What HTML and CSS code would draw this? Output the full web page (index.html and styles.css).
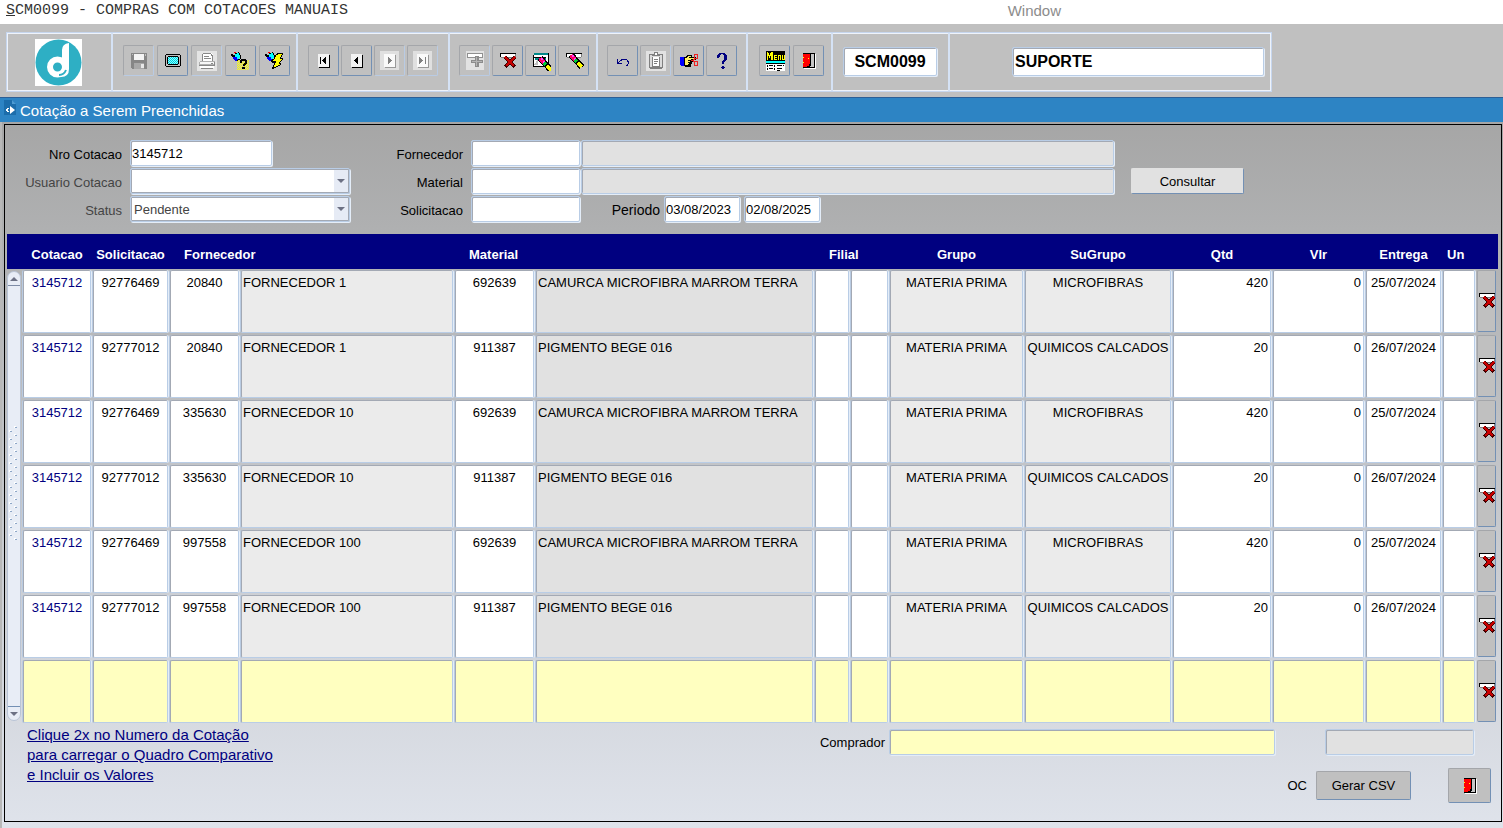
FILE: index.html
```html
<!DOCTYPE html>
<html lang="pt-BR">
<head>
    <meta charset="UTF-8">
    <meta name="viewport" content="width=device-width, initial-scale=1.0">
    <title>SCM0099 - COMPRAS COM COTACOES MANUAIS</title>
    <link rel="stylesheet" href="styles.css">
</head>
<body>
    <!-- Icons -->
    <svg class="sprite" aria-hidden="true">
        <defs>
            <pattern id="dither-yellow" width="2" height="2" patternUnits="userSpaceOnUse">
                <path fill="#ff0" d="M0 0h1v1H0zM1 1h1v1H1z"/>
            </pattern>
            <pattern id="dither-cyan" width="2" height="2" patternUnits="userSpaceOnUse">
                <path fill="#8ff" d="M0 0h2v2H0z"/>
                <path fill="#00d0e0" d="M0 0h1v1H0zM1 1h1v1H1z"/>
            </pattern>
            <pattern id="dots" width="10" height="8" patternUnits="userSpaceOnUse">
                <path fill="#fff" d="M0 4h2v2H0zM5 0h2v2H5z"/>
                <path fill="#8fa8c8" d="M1 5h2v1H1zM6 1h2v1H6z"/>
            </pattern>
        </defs>
        <symbol id="i-save" viewBox="0 0 20 20">
            <path fill="#868686" d="M2 2h16v16H3v-1H2z"/>
            <path fill="#f4f4f4" d="M5 3h10v6H5z"/>
            <path fill="#a8a8a8" d="M5 12h10v6H5z"/>
            <path fill="#e8e8e8" d="M12 13h3v4h-3z"/>
            <path fill="#c0c0c0" d="M3 3h1v1H3zM16 3h1v2h-1z"/>
        </symbol>
        <symbol id="i-screen" viewBox="0 0 20 20">
            <path fill="#000" d="M3 3h14v1h1v11h-1v1H3v-1H2V4h1z"/>
            <path fill="#c0c0c0" d="M3 4h14v11H3z"/>
            <path fill="#000" d="M5 5h10v1h1v7h-1v1H5v-1H4V6h1z"/>
            <path fill="url(#dither-cyan)" d="M5 6h10v7H5z"/>
        </symbol>
        <symbol id="i-print" viewBox="0 0 20 20">
            <path fill="#e4e4e4" d="M0 0h20v20H0z"/>
            <path fill="#fff" d="M6 2h8l2 2v6H5V3z"/>
            <path fill="#888" d="M6 2h8v1H6zM5 3h1v7H5zM14 3h1v1h1v6h-1V5h-1zM7 5h5v1H7zM7 7h7v1H7z"/>
            <path fill="#b0b0b0" d="M3 10h14l1 1v4H2v-4z"/>
            <path fill="#f8f8f8" d="M3 11h14v2H3z"/>
            <path fill="#888" d="M2 14h16v1H2zM4 17h12v1H4zM14 12h2v1h-2zM17 11h1v4h-1z"/>
            <path fill="#fff" d="M3 15h14v2H3z"/>
        </symbol>
        <symbol id="i-torch" viewBox="0 0 20 20">
            <path fill="#000" d="M0 3h2v1h2v1h1v3H3V7H2V6H1V5H0z"/>
            <path fill="#f00" d="M3 1h2v1H3z"/>
            <path fill="#0ff" d="M4 3h2V2h2v2h2v3H8v1H6V6H4z"/>
            <path fill="#00f" d="M2 6h4v2h1v2H4V9H3V8H2z"/>
            <path fill="#000" d="M4 2h2v1H4zM7 1h1v1H7zM8 2h1v2H8zM9 4h1v4H9zM7 8h2v1H7zM6 9h1v2H6z"/>
        </symbol>
        <symbol id="i-enter-query" viewBox="0 0 20 20">
            <use href="#i-torch"/>
            <path fill="url(#dither-yellow)" d="M6 9h12v10H6z"/>
            <path fill="#000" d="M10 8h5v1h1v4h-1v1h-1v1h-2v-2h1v-1h1v-2h-3v2H9V9h1zM11 16h3v2h-3z"/>
        </symbol>
        <symbol id="i-run-query" viewBox="0 0 20 20">
            <use href="#i-torch"/>
            <path fill="#000" d="M12 2h6v2h-1v2h-1v1h2v2h-1v1h-1v1h-1v1h1v2h-1v1h-2v1h-2v1H9v1H7v-2h1v-2h1v-2H7V9h1V8h1V6h1V4h1V3h1z"/>
            <path fill="#ff0" d="M13 3h4v1h-1v2h-1v2h2v1h-1v1h-1v1h-1v2h1v1h-2v1h-2v1H9v-2h1v-2h1v-2H8V9h1V8h1V6h1V4h2z"/>
        </symbol>
        <symbol id="i-page" viewBox="0 0 20 20">
            <path fill="#000" d="M5 4h11v13H5z"/>
            <path fill="#f2f2f2" d="M4 3h11v13H4z"/>
        </symbol>
        <symbol id="i-page-off" viewBox="0 0 20 20">
            <path fill="#e0e0e0" d="M0 0h19v19H0z"/>
            <path fill="#999" d="M5 4h11v13H5z"/>
            <path fill="#fafafa" d="M4 3h11v13H4z"/>
        </symbol>
        <symbol id="i-first" viewBox="0 0 20 20">
            <use href="#i-page"/>
            <path fill="#000" d="M6 6h1v7H6zM12 6v7h-1v-1h-1v-1H9v-1H8V9h1V8h1V7h1V6z"/>
        </symbol>
        <symbol id="i-prev" viewBox="0 0 20 20">
            <use href="#i-page"/>
            <path fill="#000" d="M11 6v7h-1v-1H9v-1H8v-1H7V9h1V8h1V7h1V6z"/>
        </symbol>
        <symbol id="i-next" viewBox="0 0 20 20">
            <use href="#i-page-off"/>
            <path fill="#808080" d="M8 6v7h1v-1h1v-1h1v-1h1V9h-1V8h-1V7H9V6z"/>
        </symbol>
        <symbol id="i-last" viewBox="0 0 20 20">
            <use href="#i-page-off"/>
            <path fill="#808080" d="M6 6v7h1v-1h1v-1h1v-1h1V9H9V8H8V7H7V6zM12 6h1v7h-1z"/>
        </symbol>
        <symbol id="i-insert" viewBox="0 0 20 20">
            <path fill="#e2e2e2" d="M1 0h18v19H1z"/>
            <path fill="#909090" d="M2 2h16v5H2z"/>
            <path fill="#fff" d="M3 3h14v3H3z"/>
            <path fill="#8c8c8c" d="M10 5h4v4h4v3h-4v4h-4v-4H6V9h4z"/>
            <path fill="#b4b4b4" d="M11 6h1v4h5v1h-5v4h-1v-4H7v-1h4z"/>
        </symbol>
        <symbol id="i-row" viewBox="0 0 20 20">
            <path fill="#000" d="M2 2h16v1H2zM2 3h1v3H2z"/>
            <path fill="#fff" d="M3 3h14v3H3z"/>
            <path fill="#808080" d="M17 3h1v3h-1zM3 6h14v1H3z"/>
        </symbol>
        <symbol id="i-delete" viewBox="0 0 20 20">
            <use href="#i-row"/>
            <path fill="none" stroke="#400" stroke-width="4" d="M7 6l10 10M17 6L7 16"/>
            <path fill="none" stroke="#c80000" stroke-width="2" d="M7 6l9 9M17 6l-9 9"/>
        </symbol>
        <symbol id="i-brush" viewBox="0 0 20 20">
            <path stroke="#000" stroke-width="6" d="M7 4l11 12"/>
            <path stroke="#f06" stroke-width="4" d="M7 4l4 5"/>
            <path fill="#f4f" d="M8 4h2v2H8zM10 7h2v2h-2z"/>
            <path stroke="#0c3" stroke-width="4" d="M11 9l2 2"/>
            <path stroke="#ff0" stroke-width="4" d="M14 12l4 4"/>
        </symbol>
        <symbol id="i-clear-block" viewBox="0 0 20 20">
            <path fill="#000" d="M3 2h15v3H3zM2 4h1v12H2zM17 5h1v11h-1zM3 15h15v1H3z"/>
            <path fill="#fff" d="M3 4h14v11H3z"/>
            <path fill="#088" d="M3 2h14v2H3z"/>
            <path fill="#000" d="M3 6h12v1H3z"/>
            <path fill="#088" d="M4 7h11v2H4z"/>
            <path fill="#c0c0c0" d="M3 14l4-6v6z"/>
            <use href="#i-brush" x="2" y="3"/>
        </symbol>
        <symbol id="i-clear-row" viewBox="0 0 20 20">
            <use href="#i-row"/>
            <use href="#i-brush"/>
        </symbol>
        <symbol id="i-undo" viewBox="0 0 20 20">
            <path fill="#000080" d="M4 8h1v3h1v1h3v1H4zM6 10h1v1H6zM7 9h1v1H7zM8 8h6v1h1v1h1v3h-1v2h-2v-1h1v-1h1v-2h-1V9H9v1H8z"/>
        </symbol>
        <symbol id="i-clipboard" viewBox="0 0 20 20">
            <path fill="#e2e2e2" d="M0 0h20v20H0z"/>
            <path fill="#808080" d="M3 3h14v14h-1v1H4v-1H3z"/>
            <path fill="#dcdcdc" d="M4 4h12v12H4z"/>
            <path fill="#808080" d="M8 1h4v2h2v2H6V3h2zM6 6h8v10H6z"/>
            <path fill="#fff" d="M9 2h2v2H9zM7 6h6v9H7z"/>
            <path fill="#808080" d="M8 8h4v1H8zM8 10h4v1H8zM8 12h3v1H8z"/>
        </symbol>
        <symbol id="i-hand" viewBox="0 0 20 20">
            <path fill="#00f" d="M1 6h4v9H2v-1H1z"/>
            <path fill="#000" d="M5 6h2V5h1V4h5v2h4v3h-3v2h-1v2h-1v3H6v-1H5z"/>
            <path fill="#fe6" d="M6 7h2V6h1V5h3v1h-2v1h6v1h-4v2h-1v1h1v1h-2v1h1v1H6z"/>
            <path fill="#000" d="M9 9h3v1H9zM9 11h3v1H9zM9 13h2v1H9z"/>
            <path fill="none" stroke="#e22" d="M12 9.500h2l2-2M14 9.500l2 2M15.500 3.500h3v4h-3zM15.500 10.500h3v4h-3z"/>
        </symbol>
        <symbol id="i-help" viewBox="0 0 20 20">
            <path fill="#000080" d="M7 2h6v1h1v1h1v5h-1v1h-1v1h-1v2h-2v-3h1V9h1V4h-1V3H9v1H8v2H7v1H5V4h1V3h1zM10 15h2v1h1v1h-1v1h-2v-1H9v-1h1z"/>
        </symbol>
        <symbol id="i-menu" viewBox="0 0 20 20">
            <path fill="#000" d="M1 0h19v10H1z"/>
            <path fill="#ff0" d="M2 1h1v1h1v2h1V2h1V1h2v8H6V5H5v2H4V5H3v4H2zM9 4h3v1h-2v1h2v1h-2v1h2v1H9zM13 4h3v5h-1V5h-1v4h-1zM17 4h1v4h1V4h1v5h-3z"/>
            <path fill="#0ff" d="M1 10h19v2H1z"/>
            <path fill="#000" d="M1 12h19v1H1z"/>
            <path fill="#fff" d="M1 13h19v7H1z"/>
            <path fill="#000" d="M2 14h1v2H2zM4 14h4v1H4zM9 14h1v2H9zM12 14h5v1h-5zM18 14h1v1h-1zM2 17h1v2H2zM4 17h4v1H4zM9 17h1v2H9zM12 17h5v1h-5zM12 19h3v1h-3z"/>
        </symbol>
        <symbol id="i-exit" viewBox="0 0 20 20">
            <path fill="#fff" d="M5 3h12v15H5z"/>
            <path fill="#000" d="M4 2h12v15H4z"/>
            <path fill="#c8c8c8" d="M11 3h4v13h-4z"/>
            <path fill="#f00" d="M4 3h7v10h-1v2H8v1H4z"/>
            <path fill="#ff0" d="M9 7h1v1H9zM4 6h1v1H4zM4 11h1v1H4z"/>
            <path fill="#000" d="M11 3h1v12h-1zM8 15h3v1H8z"/>
        </symbol>
    </svg>

    <div class="menubar">
        <span class="app-title"><u>S</u>CM0099 - COMPRAS COM COTACOES MANUAIS</span>
        <span class="window-menu">Window</span>
    </div>

    <div class="toolbar">
        <div class="tools tools-logo">
            <svg class="logo" viewBox="0 0 47 47" role="img" aria-label="Logo">
                <circle cx="23.500" cy="23.500" r="23" fill="#2eafc4"/>
                <circle cx="22.500" cy="28" r="7.500" fill="none" stroke="#fff" stroke-width="6"/>
                <path fill="#fff" d="M27 29V11q0-6 7-7v26q0 8-8 8l-3-3q4-2 4-6z"/>
                <path fill="none" stroke="#2eafc4" stroke-width="2" d="M24 36q5 0 7-5"/>
            </svg>
        </div>
        <div class="tools tools-file">
            <button class="tool off" aria-label="Salvar"><svg><use href="#i-save"/></svg></button>
            <button class="tool" aria-label="Tela"><svg><use href="#i-screen"/></svg></button>
            <button class="tool off" aria-label="Imprimir"><svg><use href="#i-print"/></svg></button>
            <button class="tool" aria-label="Entrar consulta"><svg><use href="#i-enter-query"/></svg></button>
            <button class="tool" aria-label="Executar consulta"><svg><use href="#i-run-query"/></svg></button>
        </div>
        <div class="tools tools-nav">
            <button class="tool" aria-label="Primeiro"><svg><use href="#i-first"/></svg></button>
            <button class="tool" aria-label="Anterior"><svg><use href="#i-prev"/></svg></button>
            <button class="tool off" aria-label="Proximo"><svg><use href="#i-next"/></svg></button>
            <button class="tool off" aria-label="Ultimo"><svg><use href="#i-last"/></svg></button>
        </div>
        <div class="tools tools-record">
            <button class="tool off" aria-label="Inserir"><svg><use href="#i-insert"/></svg></button>
            <button class="tool" aria-label="Excluir"><svg><use href="#i-delete"/></svg></button>
            <button class="tool" aria-label="Limpar bloco"><svg><use href="#i-clear-block"/></svg></button>
            <button class="tool" aria-label="Limpar registro"><svg><use href="#i-clear-row"/></svg></button>
        </div>
        <div class="tools tools-edit">
            <button class="tool" aria-label="Desfazer"><svg><use href="#i-undo"/></svg></button>
            <button class="tool off" aria-label="Lista"><svg><use href="#i-clipboard"/></svg></button>
            <button class="tool" aria-label="Recortar"><svg><use href="#i-hand"/></svg></button>
            <button class="tool" aria-label="Ajuda"><svg><use href="#i-help"/></svg></button>
        </div>
        <div class="tools tools-exit">
            <button class="tool" aria-label="Menu"><svg><use href="#i-menu"/></svg></button>
            <button class="tool" aria-label="Sair"><svg><use href="#i-exit"/></svg></button>
        </div>
        <div class="tools tools-code">
            <input class="field code" type="text" value="SCM0099" aria-label="Programa">
        </div>
        <div class="tools tools-user">
            <input class="field user" type="text" value="SUPORTE" aria-label="Usuario">
        </div>
    </div>

    <div class="window-title">
        <svg class="title-icon" viewBox="0 0 12 15">
            <path fill="#1c6dab" d="M0 0h8l4 4v11H0z"/>
            <path fill="#4d9bd3" d="M8 0l4 4H8z"/>
            <path fill="#fff" d="M6 6l5 4-5 4zM2 9h1V8h2v1H4v2h1v1H3v-1H2z"/>
        </svg>
        <h1>Cotação a Serem Preenchidas</h1>
    </div>

    <main class="workspace">
        <div class="panel">
            <form class="filters">
                <label for="nro">Nro Cotacao</label>
                <div class="line"><input class="field nro" id="nro" type="text" value="3145712"></div>
                <label for="fornecedor">Fornecedor</label>
                <div class="line">
                    <input class="field short" id="fornecedor" type="text">
                    <input class="field grow" type="text" readonly aria-label="Nome do fornecedor">
                </div>

                <label class="dim first" for="usuario">Usuario Cotacao</label>
                <div class="select"><select class="field" id="usuario"><option></option></select></div>
                <label for="material">Material</label>
                <div class="line">
                    <input class="field short" id="material" type="text">
                    <input class="field grow" type="text" readonly aria-label="Nome do material">
                </div>
                <button class="btn consult" type="button">Consultar</button>

                <label class="dim first" for="status">Status</label>
                <div class="select"><select class="field" id="status"><option>Pendente</option></select></div>
                <label for="solicitacao">Solicitacao</label>
                <div class="line">
                    <input class="field short" id="solicitacao" type="text">
                    <label class="period" for="de">Periodo</label>
                    <div class="dates">
                        <input class="field date" id="de" type="text" value="03/08/2023">
                        <input class="field date" type="text" value="02/08/2025" aria-label="Periodo ate">
                    </div>
                </div>
            </form>

            <div class="grid">
                <div class="scroll">
                    <button class="scroll-btn up" aria-label="Subir"></button>
                    <svg class="grip" aria-hidden="true"><rect width="10" height="116" fill="url(#dots)"/></svg>
                    <button class="scroll-btn down" aria-label="Descer"></button>
                </div>
                <table>
                    <colgroup>
                        <col class="c-cot"><col class="c-sol"><col class="c-cod"><col class="c-for"><col class="c-mat"><col>
                        <col class="c-fil"><col class="c-emp"><col class="c-gru"><col class="c-sub"><col class="c-qtd">
                        <col class="c-vlr"><col class="c-ent"><col class="c-un"><col class="c-del">
                    </colgroup>
                    <thead>
                        <tr>
                            <th>Cotacao</th><th>Solicitacao</th><th class="left" colspan="2">Fornecedor</th>
                            <th class="left" colspan="2">Material</th><th class="left" colspan="2">Filial</th>
                            <th>Grupo</th><th>SuGrupo</th><th>Qtd</th><th>Vlr</th><th>Entrega</th><th class="unit">Un</th><th></th>
                        </tr>
                    </thead>
                    <tbody>
                        <tr>
                            <td class="link">3145712</td><td>92776469</td><td>20840</td><td class="name">FORNECEDOR 1</td>
                            <td>692639</td><td class="name dark">CAMURCA MICROFIBRA MARROM TERRA</td><td></td><td></td>
                            <td class="gray">MATERIA PRIMA</td><td class="gray">MICROFIBRAS</td><td class="num">420</td>
                            <td class="num">0</td><td>25/07/2024</td><td></td>
                            <td class="action"><button class="del" aria-label="Excluir linha"><svg><use href="#i-delete"/></svg></button></td>
                        </tr>
                        <tr>
                            <td class="link">3145712</td><td>92777012</td><td>20840</td><td class="name">FORNECEDOR 1</td>
                            <td>911387</td><td class="name dark">PIGMENTO BEGE 016</td><td></td><td></td>
                            <td class="gray">MATERIA PRIMA</td><td class="gray">QUIMICOS CALCADOS</td><td class="num">20</td>
                            <td class="num">0</td><td>26/07/2024</td><td></td>
                            <td class="action"><button class="del" aria-label="Excluir linha"><svg><use href="#i-delete"/></svg></button></td>
                        </tr>
                        <tr>
                            <td class="link">3145712</td><td>92776469</td><td>335630</td><td class="name">FORNECEDOR 10</td>
                            <td>692639</td><td class="name dark">CAMURCA MICROFIBRA MARROM TERRA</td><td></td><td></td>
                            <td class="gray">MATERIA PRIMA</td><td class="gray">MICROFIBRAS</td><td class="num">420</td>
                            <td class="num">0</td><td>25/07/2024</td><td></td>
                            <td class="action"><button class="del" aria-label="Excluir linha"><svg><use href="#i-delete"/></svg></button></td>
                        </tr>
                        <tr>
                            <td class="link">3145712</td><td>92777012</td><td>335630</td><td class="name">FORNECEDOR 10</td>
                            <td>911387</td><td class="name dark">PIGMENTO BEGE 016</td><td></td><td></td>
                            <td class="gray">MATERIA PRIMA</td><td class="gray">QUIMICOS CALCADOS</td><td class="num">20</td>
                            <td class="num">0</td><td>26/07/2024</td><td></td>
                            <td class="action"><button class="del" aria-label="Excluir linha"><svg><use href="#i-delete"/></svg></button></td>
                        </tr>
                        <tr>
                            <td class="link">3145712</td><td>92776469</td><td>997558</td><td class="name">FORNECEDOR 100</td>
                            <td>692639</td><td class="name dark">CAMURCA MICROFIBRA MARROM TERRA</td><td></td><td></td>
                            <td class="gray">MATERIA PRIMA</td><td class="gray">MICROFIBRAS</td><td class="num">420</td>
                            <td class="num">0</td><td>25/07/2024</td><td></td>
                            <td class="action"><button class="del" aria-label="Excluir linha"><svg><use href="#i-delete"/></svg></button></td>
                        </tr>
                        <tr>
                            <td class="link">3145712</td><td>92777012</td><td>997558</td><td class="name">FORNECEDOR 100</td>
                            <td>911387</td><td class="name dark">PIGMENTO BEGE 016</td><td></td><td></td>
                            <td class="gray">MATERIA PRIMA</td><td class="gray">QUIMICOS CALCADOS</td><td class="num">20</td>
                            <td class="num">0</td><td>26/07/2024</td><td></td>
                            <td class="action"><button class="del" aria-label="Excluir linha"><svg><use href="#i-delete"/></svg></button></td>
                        </tr>
                        <tr class="blank">
                            <td></td><td></td><td></td><td></td><td></td><td></td><td></td>
                            <td></td><td></td><td></td><td></td><td></td><td></td><td></td>
                            <td class="action"><button class="del" aria-label="Excluir linha"><svg><use href="#i-delete"/></svg></button></td>
                        </tr>
                    </tbody>
                </table>
            </div>

            <div class="footer">
                <a class="hint" href="#">Clique 2x no Numero da Cotação<br>para carregar o Quadro Comparativo<br>e Incluir os Valores</a>
                <div class="footer-right">
                    <div class="buyer">
                        <label for="comprador">Comprador</label>
                        <input class="field yellow" id="comprador" type="text">
                        <input class="field total" type="text" readonly aria-label="Total">
                    </div>
                    <div class="actions">
                        <span>OC</span>
                        <button class="btn csv">Gerar CSV</button>
                        <button class="btn exit" aria-label="Sair"><svg><use href="#i-exit"/></svg></button>
                    </div>
                </div>
            </div>
        </div>
    </main>
</body>
</html>
```
FILE: styles.css
```css
* {
    margin: 0;
    padding: 0;
    box-sizing: border-box;
}

body {
    display: flex;
    flex-direction: column;
    min-height: 100vh;
    background-color: #c0c0c0;
    color: #000;
    font-family: "Liberation Sans", Arial, sans-serif;
    font-size: 13px;
    line-height: 15px;
}

input, select, button {
    font: inherit;
    color: inherit;
}

.sprite {
    position: absolute;
    width: 0;
    height: 0;
}

symbol {
    shape-rendering: crispEdges;
}

/* Menu bar */
.menubar {
    display: flex;
    height: 24px;
    padding: 0 442px 0 6px;
    justify-content: space-between;
    background-color: #fff;
    font-size: 15px;
    line-height: 22px;
}

.app-title {
    color: #333;
    font-family: "Liberation Mono", "Courier New", monospace;
}

.window-menu {
    color: #8c8c8c;
}

/* Toolbar */
.toolbar {
    display: flex;
    height: 60px;
    margin: 8px 231px 5px 6px;
    border: 1px solid #c6d6ee;
    box-shadow: inset 0 0 0 1px #eef3fb;
}

.tools {
    display: flex;
    gap: 2px;
    padding: 12px 0 0 9px;
    border-right: 2px solid #d5e2f5;
}

.tools-logo { width: 106px; padding: 6px 0 0 28px; }
.tools-file { width: 185px; padding-left: 10px; gap: 3px; }
.tools-nav { width: 152px; padding-left: 10px; }
.tools-record { width: 148px; }
.tools-edit { width: 150px; }
.tools-exit { width: 85px; padding-left: 11px; gap: 3px; }
.tools-code { width: 117px; padding-top: 14px; padding-left: 10px; }
.tools-user { flex: 1; padding: 14px 7px 0 62px; border-right: none; }

.logo {
    width: 47px;
    height: 47px;
    background-color: #fff;
}

.tool {
    display: flex;
    width: 31px;
    height: 31px;
    align-items: center;
    justify-content: center;
    background-color: transparent;
    border: 1px solid #a4a6aa;
    border-right-color: #7390b4;
    border-bottom-color: #7390b4;
    border-radius: 2px;
}

.tool.off {
    border-right-color: #b9cbe4;
    border-bottom-color: #b9cbe4;
}

.tool svg, .exit svg {
    width: 20px;
    height: 20px;
}

/* Fields */
.field {
    height: 26px;
    min-width: 0;
    padding: 0 1px;
    background-color: #fff;
    border: 1px solid #b9cde6;
    border-radius: 2px;
    outline: none;
    box-shadow: inset 1px 1px 0 #a3a9b4, 1px 1px 0 #e4edf8;
}

.field:read-only:not(select) {
    background-color: #e1e1e1;
}

.code, .user {
    font-size: 16px;
    font-weight: bold;
}

.code {
    width: 94px;
    height: 29px;
    text-align: center;
}

.user {
    width: 100%;
    height: 29px;
    padding-left: 2px;
}

/* Window title */
.window-title {
    display: flex;
    height: 25px;
    padding: 2px 4px 0;
    gap: 4px;
    background-color: #2d84c4;
    border-top: 1px solid #2c5f96;
    color: #fff;
}

.window-title h1 {
    font-size: 15px;
    font-weight: normal;
    line-height: 22px;
}

.title-icon {
    width: 12px;
    height: 15px;
}

/* Workspace */
.workspace {
    display: flex;
    flex: 1;
    padding: 2px 1px 6px 2px;
    background: linear-gradient(#a6a6a6, #afb0b1 15%, #dfe3eb);
    border-left: 2px solid #b8b8b8;
}

.panel {
    flex: 1;
    border: 1px solid #000;
}

.filters {
    display: grid;
    grid-template-columns: 117px 220px 105px 1fr 122px;
    grid-template-rows: repeat(3, 26px);
    gap: 2px 8px;
    padding: 15px 257px 12px 0;
}

.filters label {
    padding-top: 7px;
    text-align: right;
}

.filters .first {
    grid-column: 1;
}

.filters .dim, .select {
    color: #444;
}

.line {
    display: flex;
    gap: 1px;
}

.nro {
    width: 142px;
}

.short {
    width: 109px;
}

.grow {
    flex: 1;
}

.select {
    position: relative;
}

.select select {
    width: 100%;
    padding: 0 3px;
    appearance: none;
    background: linear-gradient(to left, #a3a9b4 1px, #e6ebf5 1px, #e6ebf5 15px, #fff 15px);
    box-shadow: inset 0 0 0 1px #a3a9b4, 1px 1px 0 #e4edf8;
}

.select::after {
    content: "";
    position: absolute;
    top: 11px;
    right: 5px;
    border: 4px solid transparent;
    border-top: 4px solid #6c7184;
    border-bottom: none;
    pointer-events: none;
}

.filters .period {
    width: 79px;
    padding-top: 7px;
    font-size: 14px;
}

.dates {
    display: flex;
    gap: 4px;
    margin-left: 3px;
}

.date {
    width: 76px;
}

.btn {
    background-color: #c0c0c0;
    border: 1px solid #a4a6aa;
    border-right-color: #7390b4;
    border-bottom-color: #7390b4;
    border-radius: 2px;
}

.consult {
    margin-left: 9px;
    background-color: #e1e1e1;
    border-top-color: #e1e1e1;
    border-left-color: #e1e1e1;
}

/* Grid */
.grid {
    display: flex;
    margin: 0 3px 0 2px;
    background: linear-gradient(#000080 35px, transparent 35px);
}

.scroll {
    display: flex;
    flex-direction: column;
    width: 14px;
    margin: 37px 0 4px;
    align-items: center;
    justify-content: space-between;
    background-color: #e8edf6;
    border: 1px solid #b9c4d6;
    border-radius: 7px;
}

.scroll-btn {
    display: flex;
    width: 12px;
    height: 14px;
    align-items: center;
    justify-content: center;
    background-color: transparent;
    border: none;
    border-bottom: 1px solid #7e8ca6;
}

.scroll-btn.down {
    border-top: 1px solid #7390b4;
    border-bottom: none;
}

.scroll-btn::before {
    content: "";
    width: 0;
    border: 4px solid transparent;
    border-top: none;
    border-bottom-color: #6c7184;
}

.scroll-btn.down::before {
    border-top: 4px solid #6c7184;
    border-bottom: none;
}

.grip {
    width: 10px;
    height: 116px;
    margin-bottom: 24px;
}

table {
    flex: 1;
    width: 100%;
    table-layout: fixed;
    border-collapse: separate;
    border-spacing: 2px;
}

.c-cot { width: 68px; }
.c-sol { width: 75px; }
.c-cod { width: 69px; }
.c-for { width: 212px; }
.c-mat { width: 79px; }
.c-fil { width: 34px; }
.c-emp { width: 37px; }
.c-gru { width: 133px; }
.c-sub { width: 146px; }
.c-qtd { width: 98px; }
.c-vlr { width: 91px; }
.c-ent { width: 75px; }
.c-un { width: 32px; }
.c-del { width: 19px; }

th {
    height: 32px;
    padding-top: 5px;
    color: #fff;
    text-align: center;
    white-space: nowrap;
}

th.left {
    padding-left: 14px;
    text-align: left;
}

th.unit {
    padding-left: 4px;
    text-align: left;
}

td {
    height: 63px;
    padding: 4px 1px 0;
    background-color: #fff;
    border: 1px solid #a3a9b4;
    border-right-color: #b9cde6;
    border-bottom-color: #b9cde6;
    border-radius: 2px;
    box-shadow: 1px 0 0 #e4edf8, -1px 0 0 #b9cbe2;
    text-align: center;
    vertical-align: top;
    white-space: nowrap;
}

td.link {
    color: #000080;
}

td.name {
    background-color: #ebebeb;
    text-align: left;
}

td.gray {
    background-color: #ebebeb;
}

td.dark {
    background-color: #e1e1e1;
}

td.num {
    padding-right: 2px;
    text-align: right;
}

.blank td {
    background-color: #ffffc0;
}

.action, .blank .action {
    padding: 0;
    background-color: transparent;
    border: none;
    box-shadow: none;
}

.del {
    display: flex;
    width: 100%;
    height: 62px;
    align-items: center;
    justify-content: center;
    background-color: #c0c0c0;
    border: 1px solid #a4a6aa;
    border-right-color: #7390b4;
    border-bottom-color: #7390b4;
    border-radius: 2px;
}

.del svg {
    flex: none;
    width: 20px;
    height: 20px;
}

/* Footer */
.footer {
    display: flex;
    justify-content: space-between;
    padding: 0 10px 0 22px;
}

.hint {
    color: #000080;
    font-size: 15px;
    line-height: 20px;
}

.footer-right {
    display: flex;
    flex-direction: column;
    align-items: flex-end;
    gap: 13px;
    padding-top: 4px;
}

.buyer {
    display: flex;
    align-items: center;
    gap: 4px;
    padding-right: 17px;
}

.yellow {
    width: 386px;
    background-color: #ffffc0;
}

.total {
    width: 149px;
    margin-left: 46px;
}

.actions {
    display: flex;
    align-items: center;
    gap: 9px;
}

.csv {
    width: 95px;
    height: 29px;
}

.exit {
    display: flex;
    width: 43px;
    height: 35px;
    margin-left: 28px;
    align-items: center;
    justify-content: center;
}
```
